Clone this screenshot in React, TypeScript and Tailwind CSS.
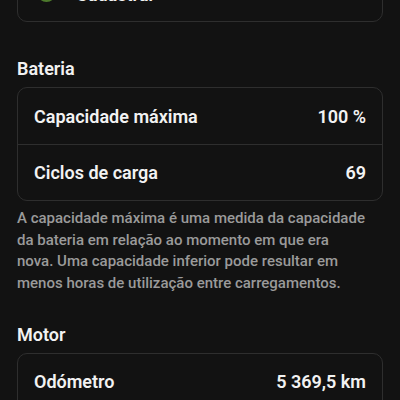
import React from 'react'

type Row = {
    label: string;
    value: string;
}

const batteryRows: Row[] = [
    { label: "Capacidade máxima", value: "100 %" },
    { label: "Ciclos de carga", value: "69" },
]

const motorRows: Row[] = [
    { label: "Odómetro", value: "5 369,5 km" },
    { label: "Horas de funcionamento", value: "312 h" },
]

const InfoCard: React.FC<{ rows: Row[] }> = ({ rows }) => {
    return (
        <div className="rounded-[10px] border border-[#2e2e2e]">
            {rows.map((row, index) => (
                <div
                    key={index}
                    className={`flex h-[56px] items-center justify-between px-4 ${index > 0 ? "border-t border-[#2e2e2e]" : ""}`}
                >
                    <span className="text-[18px] font-semibold text-[#f2f2f2]">{row.label}</span>
                    <span className="text-[18px] font-semibold text-[#f2f2f2]">{row.value}</span>
                </div>
            ))}
        </div>
    )
}

const App: React.FC = () => {
    return (
        <div className="h-[400px] w-[400px] overflow-hidden bg-[#121212] px-[17px] font-['Roboto',sans-serif]">
            {/* card above, mostly scrolled away */}
            <div className="-mt-[41px] flex h-[63px] items-center gap-[20px] rounded-[10px] border border-[#2e2e2e] px-[19px] pt-[7px]">
                <div className="mb-[4px] h-[19px] w-[19px] rounded-full border-2 border-[#4d7a2c]"></div>
                <span className="text-[18px] font-semibold text-[#f2f2f2]">Cadastrar</span>
            </div>

            <h2 className="mt-[35px] text-[18px] font-semibold leading-[24px] text-[#f2f2f2]">Bateria</h2>
            <div className="mt-[6px]">
                <InfoCard rows={batteryRows} />
            </div>
            <p className="mt-[7px] text-[15px] font-medium leading-[21.7px] text-[#9a9a9a]">
                A capacidade máxima é uma medida da capacidade<br />
                da bateria em relação ao momento em que era<br />
                nova. Uma capacidade inferior pode resultar em<br />
                menos horas de utilização entre carregamentos.
            </p>

            <h2 className="mt-[28px] text-[18px] font-semibold leading-[24px] text-[#f2f2f2]">Motor</h2>
            <div className="mt-[6px]">
                <InfoCard rows={motorRows} />
            </div>
        </div>
    )
}

export default App
